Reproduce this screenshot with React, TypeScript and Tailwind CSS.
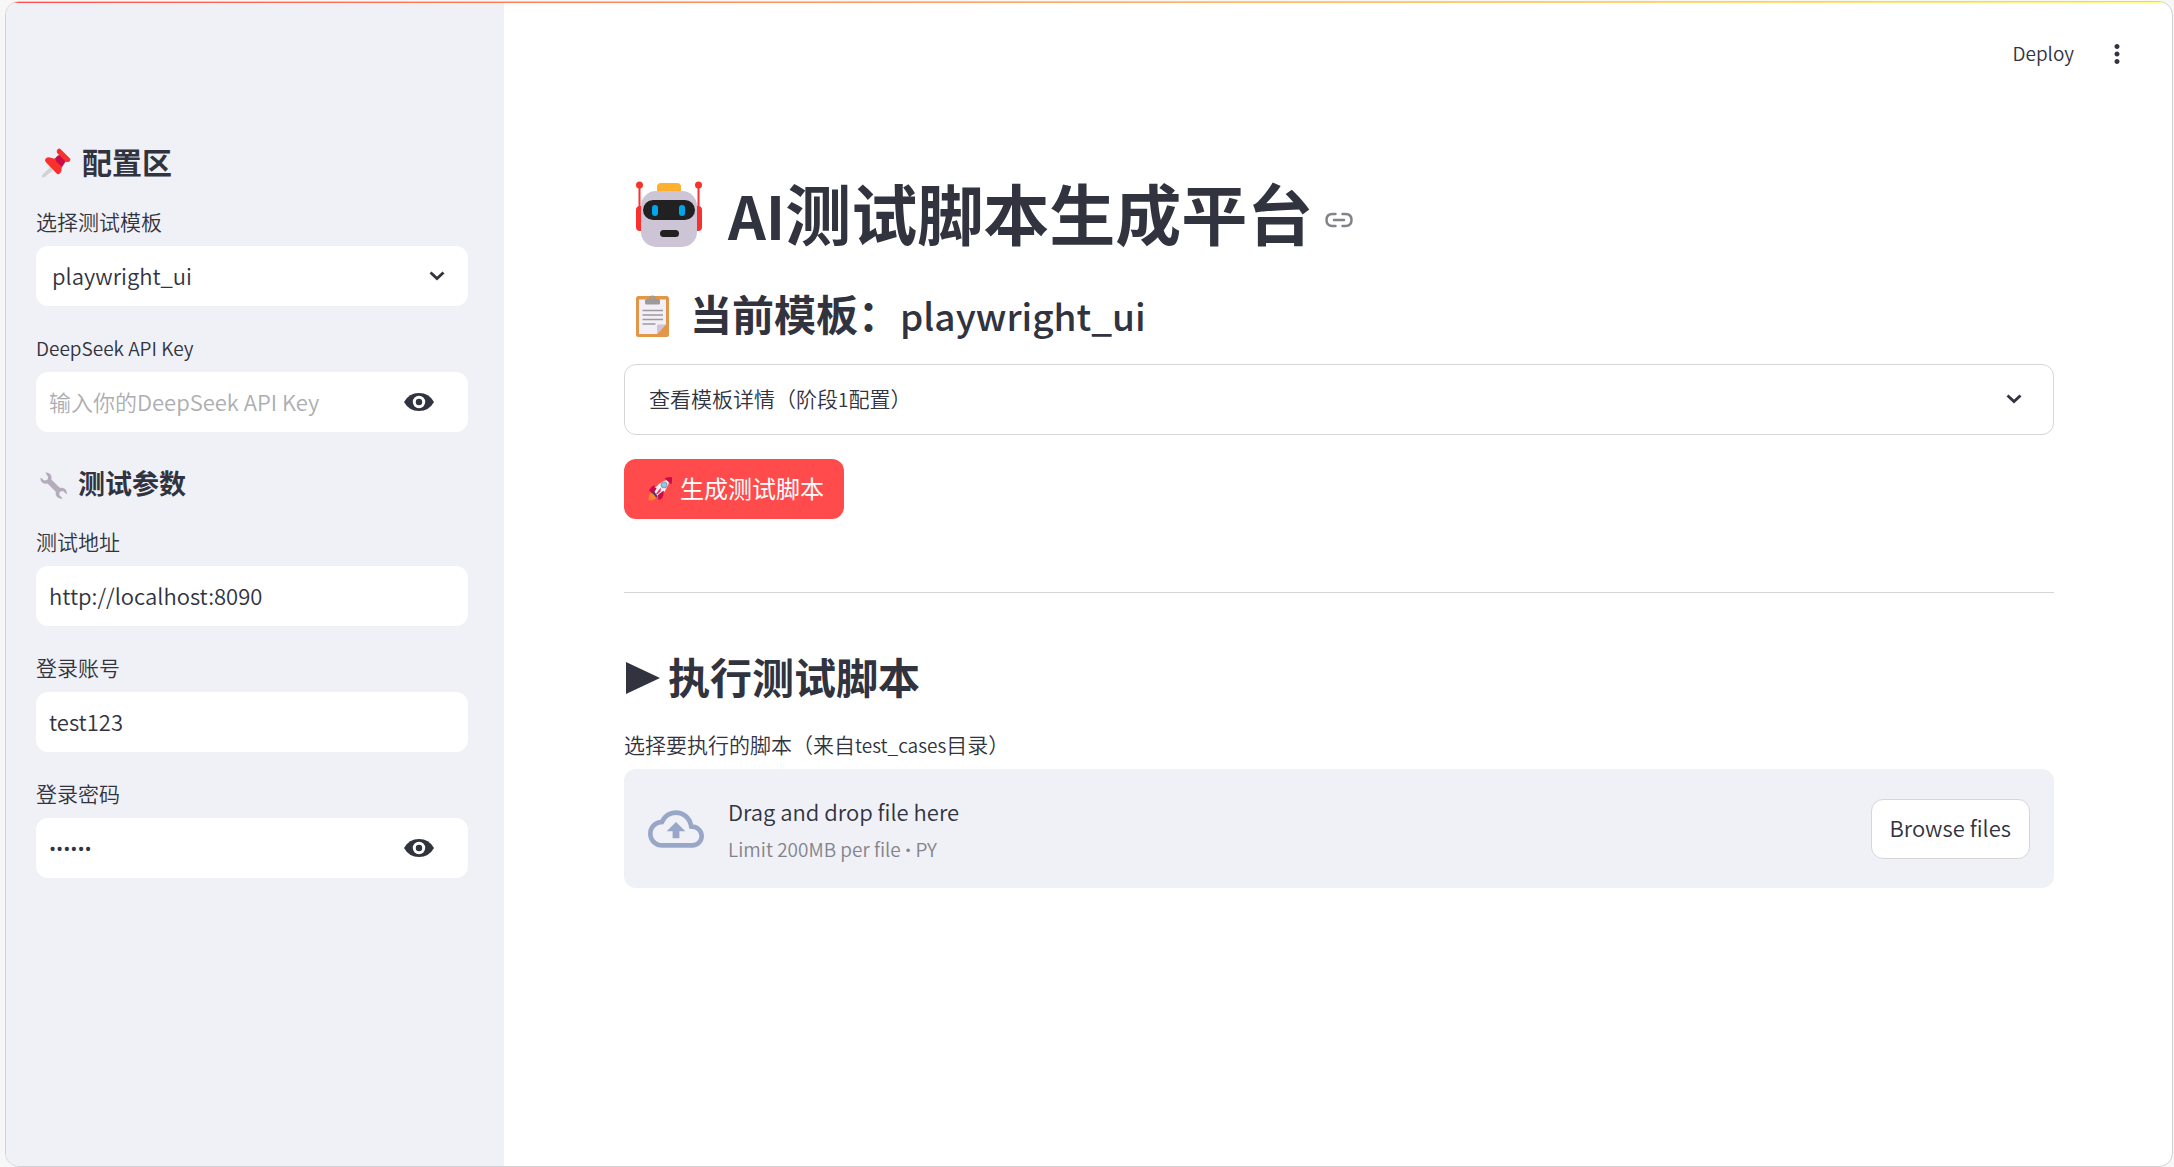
import { useState } from "react"
import type { ReactNode } from "react"
import { MdOutlineBackup, MdMoreVert } from "react-icons/md"

const PushpinEmoji = () => (
    <svg viewBox="0 0 32 32" className="size-[30px]" aria-hidden="true">
        <path d="M13.5 17 17 20.5 3.5 31.2q-1.6.9-2.3-.2t0-2.2z" fill="#d3d3d3" />
        <path d="m18 8 7-2 2 7-5 8-7 1-5-6z" fill="#ca0b4a" />
        <path d="M17.8 1.2q1.6-1.6 3.2 0l9.7 9.7q1.500 1.500-.1 3.100-1.500 1.300-3.900.9L17.200 5.300q-1-2.700.6-4.100Z" fill="#f8312f" />
        <path d="M5 11.200q2.400-2.200 5.500-.9l5.800 1.700-.2 2.200 5 4.800 1.200.2-.5 5q-.8 2.500-2.400 3.500-1.600.6-3-.9L5 15q-1.500-1.900 0-3.800Z" fill="#f8312f" />
    </svg>
)

const WrenchEmoji = () => (
    <svg viewBox="1 1 31 31" className="size-[27px]" aria-hidden="true">
        <path
            d="M7.100 1.600q4.500-.8 6.500 2.800 1.100 2.300.4 5.100l9.700 9.700q4.500-1 6.900 2.200 1.700 2.400 1 5.200l-4.200-3.900-3.600.9-.8 3.500 4 4.300q-4.500 1-6.900-2.200-1.600-2.300-1-5.400l-9.500-9.500Q5 15.300 2.700 12.300 1 9.800 1.800 7.200l4.100 3.700 3.500-.7.900-3.600z"
            fill="#b4acbc"
        />
    </svg>
)

const RobotEmoji = () => (
    <svg viewBox="0 0 66 66" className="size-[66px]" aria-hidden="true">
        <g fill="#f8312f">
            <circle cx="3.500" cy="4" r="3.500" />
            <circle cx="62.500" cy="4" r="3.500" />
            <path d="M2.500 5h2v22h-2zM61.500 5h2v22h-2z" />
            <rect y="25" width="10" height="25" rx="4" />
            <rect x="56" y="25" width="10" height="25" rx="4" />
        </g>
        <rect x="21" y="2" width="24" height="14" rx="4" fill="#ffb02e" />
        <rect x="5" y="10" width="56" height="56" rx="15" fill="#cdc4d6" />
        <rect x="7" y="19" width="52" height="20" rx="10" fill="#212121" />
        <rect x="16" y="24" width="6" height="11" rx="3" fill="#00a6ed" />
        <rect x="43" y="24" width="6" height="11" rx="3" fill="#00a6ed" />
        <rect x="24" y="49" width="19" height="7" rx="3.500" fill="#212121" />
    </svg>
)

const ClipboardEmoji = () => (
    <svg viewBox="0 0 34 42" className="h-[42px] w-[34px]" aria-hidden="true">
        <rect y="1" width="33" height="41" rx="2.500" fill="#e19747" />
        <path d="M3 4.500h27V29l-9 10H3z" fill="#f3eef8" />
        <path d="M21 39v-8q0-1.500 1.500-1.500H30z" fill="#cdc4d6" />
        <path d="M6.500 15.500h20.500M6.500 20h20.500M6.500 24.500h20.500M6.500 29h13" stroke="#9b9b9b" strokeWidth="1.600" />
        <path d="M9 5.500Q9 4 10.500 4H13a3.500 3.500 0 0 1 7 0h2.500Q24 4 24 5.500V8q0 1.500-1.500 1.500h-12Q9 9.500 9 8z" fill="#9b9b9b" />
        <circle cx="16.500" cy="3" r="1.200" fill="#e19747" />
    </svg>
)

const RocketEmoji = () => (
    <svg viewBox="0 0 32 32" className="size-6" aria-hidden="true">
        <path d="M1 31q-1-8 3.500-10.500l7 6.500Q9 32 1 31Z" fill="#ff822d" />
        <path d="M9 11q-5 1-7.500 7.500L8 18zM21 23q-1 5-5.500 8l-1-6.500z" fill="#ca0b4a" />
        <path d="M6 22Q10 7 29 2.500 26 21 11 27z" fill="#f4f4f4" />
        <path d="M22 1.500Q30-1 31.500.5T31 10z" fill="#ca0b4a" />
        <path d="M1.500 18q5-5.500 10-3l-4.500 8zM13 24l8-6q1 6-7 12.500z" fill="#ca0b4a" />
        <path d="m17 14-7 9q4 0 7-4z" fill="#f92f60" />
        <path d="m5.500 21 5.500 6.500 2-2L8 19z" fill="#533566" />
        <circle cx="21.500" cy="10.500" r="3.800" fill="#83cbff" stroke="#9b9b9b" strokeWidth="1.500" />
    </svg>
)

const LinkIcon = () => (
    <svg viewBox="0 0 28 16" className="h-4 w-7" fill="none" stroke="#83848b" strokeWidth="2.500" aria-hidden="true">
        <path d="M10.500 2H7.500Q1.500 2 1.500 8t6 6h3M17.500 2h3q6 0 6 6t-6 6h-3M9 8h10" strokeLinecap="round" />
    </svg>
)

const ChevronIcon = () => (
    <svg viewBox="0 0 16 10" className="h-2.5 w-4" fill="none" stroke="#31333f" strokeWidth="2.800" aria-hidden="true">
        <path d="m1.500 1.500 6.500 6 6.500-6" />
    </svg>
)

const EyeIcon = () => (
    <svg viewBox="0 0 30 18" className="h-[18px] w-[30px]" aria-hidden="true">
        <path d="M0 9Q5 0 15 0t15 9q-5 9-15 9T0 9Z" fill="#31333f" />
        <circle cx="15" cy="9" r="4.700" fill="#31333f" stroke="#fff" strokeWidth="3" />
    </svg>
)

type FieldProps = {
    id: string
    label: string
    type?: string
    defaultValue?: string
    placeholder?: string
}

const labelClass = "mb-1.5 block h-9 text-[21px] leading-[34px]"

const Field = ({ id, label, type = "text", defaultValue, placeholder }: FieldProps) => {
    const [visible, setVisible] = useState(false)
    const isPassword = type === "password"
    const isLatin = /^[\x20-\x7e]+$/.test(label)

    return (
        <div>
            <label htmlFor={id} className={labelClass}>
                {isLatin ? <span className="text-[19px]">{label}</span> : label}
            </label>
            <div className="flex h-15 items-center rounded-xl bg-white">
                <input
                    id={id}
                    type={visible ? "text" : type}
                    defaultValue={defaultValue}
                    placeholder={placeholder}
                    className={`h-full min-w-0 flex-1 rounded-xl bg-transparent pl-[13px] text-[22px] outline-none placeholder:font-['Noto_Sans_CJK_SC'] placeholder:text-[#adaeb2] ${isPassword && !visible ? "pt-0.5 font-['Roboto',sans-serif]" : "pb-0.5"}`}
                />
                {isPassword && (
                    <button type="button" aria-label="Show password text" className="mr-[34px]" onClick={() => setVisible(!visible)}>
                        <EyeIcon />
                    </button>
                )}
            </div>
        </div>
    )
}

const SidebarHeading = ({ icon, className, children }: { icon: ReactNode; className: string; children: ReactNode }) => (
    <h2 className={`flex items-center gap-[11px] font-bold ${className}`}>
        {icon}
        <span className="pb-1">{children}</span>
    </h2>
)

const Sidebar = () => (
    <aside className="w-[498px] shrink-0 bg-[#f0f1f6] pt-[137px] pr-9 pb-12 pl-[30px]">
        <SidebarHeading icon={<PushpinEmoji />} className="mb-[17px] pl-[5px] text-[30px] leading-[44px]">配置区</SidebarHeading>

        <label htmlFor="template" className={labelClass}>选择测试模板</label>
        <div className="relative mb-6">
            <select id="template" className="h-15 w-full appearance-none rounded-xl bg-white pb-0.5 pl-4 text-[22px] outline-none">
                <option>playwright_ui</option>
            </select>
            <span className="pointer-events-none absolute inset-y-0 right-[23px] flex items-center">
                <ChevronIcon />
            </span>
        </div>

        <Field id="apiKey" label="DeepSeek API Key" type="password" placeholder="输入你的DeepSeek API Key" />

        <SidebarHeading icon={<WrenchEmoji />} className="mt-[31px] mb-[17px] pl-1 text-[27px] leading-10">测试参数</SidebarHeading>

        <div className="flex flex-col gap-6">
            <Field id="url" label="测试地址" defaultValue="http://localhost:8090" />
            <Field id="account" label="登录账号" defaultValue="test123" />
            <Field id="password" label="登录密码" type="password" defaultValue="123456" />
        </div>
    </aside>
)

const UploadBox = () => (
    <div className="flex items-center rounded-xl bg-[#f0f1f6] px-6 py-5">
        <MdOutlineBackup className="mr-6 size-14 text-[#98a7c7]" />
        <div className="flex-1 pt-[3px]">
            <p className="text-[22px] leading-[38px]">Drag and drop file here</p>
            <p className="text-[19px] leading-[38px] text-[#83848b]">
                Limit 200MB per file <span className="font-['Roboto',sans-serif] leading-none">•</span> PY
            </p>
        </div>
        <button type="button" className="h-15 rounded-xl border border-[#d6d6d9] bg-white px-[18px] pb-0.5 text-[22px]">Browse files</button>
    </div>
)

const App = () => {
    return (
        <div className="flex min-h-screen bg-[#f7f7f7] pt-px pr-px pl-[5px] font-['Noto_Sans_CJK_SC',sans-serif] font-[350] text-[#31333f]">
            <div className="relative flex flex-1 overflow-hidden rounded-[14px] border border-[#d0d1d4] bg-white">
                <div className="absolute inset-x-0 top-0 h-px bg-linear-to-r from-[#ff4b4b] to-[#fffd80]" />
                <Sidebar />

                <div className="min-w-0 flex-1">
                    <header className="flex h-[104px] items-center justify-end gap-7 pr-10">
                        <button type="button" className="pb-0.5 text-[19px]">Deploy</button>
                        <button type="button" aria-label="Main menu">
                            <MdMoreVert className="size-[30px]" />
                        </button>
                    </header>

                    <main className="pt-[65px] pr-[118px] pb-12 pl-[120px]">
                        <h1 id="title" className="flex items-center pl-3 text-[66px] leading-20 font-bold">
                            <RobotEmoji />
                            <span className="ml-[26px] pb-1.5"><span className="text-[59px] leading-none">AI</span>测试脚本生成平台</span>
                            <a href="#title" aria-label="Link to heading" className="mt-3 ml-3"><LinkIcon /></a>
                        </h1>

                        <h2 className="mt-[26px] flex items-center pl-3 text-[42px] leading-15 font-bold">
                            <ClipboardEmoji />
                            <span className="ml-5 pb-1.5">当前模板：<span className="text-[37px] leading-none font-medium">playwright_ui</span></span>
                        </h2>

                        <details className="mt-[15px] rounded-xl border border-[#d6d6d9]">
                            <summary className="flex h-[69px] cursor-pointer list-none items-center justify-between pr-[31px] pb-0.5 pl-6 text-[21px]">
                                <span>查看模板详情（阶段<span className="text-[19px]">1</span>配置）</span>
                                <ChevronIcon />
                            </summary>
                        </details>

                        <button type="button" className="mt-6 flex h-15 items-center gap-2 rounded-xl bg-[#ff4b4b] pr-5 pl-6 text-2xl font-normal text-white">
                            <RocketEmoji />
                            <span className="pb-0.5">生成测试脚本</span>
                        </button>

                        <hr className="mt-[73px] border-[#d6d6d9]" />

                        <h2 className="mt-[53px] flex items-center gap-2 text-[42px] leading-15 font-bold">
                            <svg viewBox="0 0 36 32" className="h-8 w-9" fill="currentColor" aria-hidden="true">
                                <path d="M2 0v32l34-16z" />
                            </svg>
                            <span className="pb-1">执行测试脚本</span>
                        </h2>

                        <p className="mt-[17px] mb-1.5 h-9 text-[21px] leading-[34px]">
                            选择要执行的脚本（来自<span className="text-[19px]">test_cases</span>目录）
                        </p>
                        <UploadBox />
                    </main>
                </div>
            </div>
        </div>
    )
}

export default App
